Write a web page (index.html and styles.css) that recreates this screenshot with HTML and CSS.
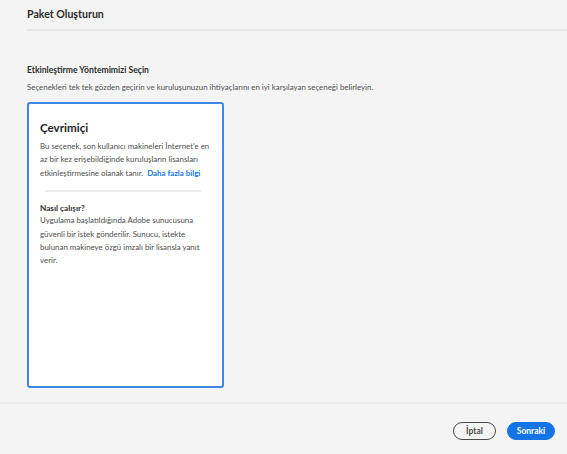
FILE: index.html
```html
<!DOCTYPE html>
<html lang="tr">
<head>
<meta charset="utf-8">
<title>Paket Oluşturun</title>
<link rel="stylesheet" href="styles.css">
</head>
<body>
<div class="page">
  <header class="header">
    <h1 class="header-title">Paket Oluşturun</h1>
  </header>
  <main class="content">
    <h2 class="section-title">Etkinleştirme Yöntemimizi Seçin</h2>
    <p class="section-desc">Seçenekleri tek tek gözden geçirin ve kuruluşunuzun ihtiyaçlarını en iyi karşılayan seçeneği belirleyin.</p>
    <div class="card">
      <h3 class="card-title">Çevrimiçi</h3>
      <p class="card-text">Bu seçenek, son kullanıcı makineleri İnternet'e en az bir kez erişebildiğinde kuruluşların lisansları etkinleştirmesine olanak tanır.&nbsp; <a class="link" href="#">Daha fazla bilgi</a></p>
      <hr class="card-divider">
      <h4 class="card-subtitle">Nasıl çalışır?</h4>
      <p class="card-text">Uygulama başlatıldığında Adobe sunucusuna güvenli bir istek gönderilir. Sunucu, istekte bulunan makineye özgü imzalı bir lisansla yanıt verir.</p>
    </div>
  </main>
  <footer class="footer">
    <button class="btn btn-secondary">İptal</button>
    <button class="btn btn-primary">Sonraki</button>
  </footer>
</div>
</body>
</html>
```
FILE: styles.css
```css
* { box-sizing: border-box; }
html, body { margin: 0; padding: 0; }
body {
  background: #f4f4f4;
  font-family: "Lato", "Open Sans", sans-serif;
  color: #2c2c2c;
  width: 567px;
  height: 454px;
  overflow: hidden;
}
.page {
  display: flex;
  flex-direction: column;
  height: 454px;
}
.header {
  margin-left: 27px;
  height: 31px;
  border-bottom: 2px solid #e8e8e8;
  display: flex;
  align-items: center;
}
.header-title {
  margin: 0;
  font-size: 10.6px;
  font-weight: 700;
  color: #2c2c2c;
  padding-bottom: 1px;
}
.content {
  flex: 1;
  padding: 33px 0 0 27px;
  border-bottom: 2px solid #ebebeb;
}
.section-title {
  margin: 0;
  font-size: 8.6px;
  font-weight: 700;
  color: #2c2c2c;
  line-height: 12px;
}
.section-desc {
  margin: 5px 0 0;
  font-size: 7.9px;
  color: #505050;
  line-height: 12px;
}
.card {
  margin-top: 9px;
  width: 197px;
  height: 286px;
  background: #fff;
  border: 2px solid #3f86e6;
  border-radius: 3px;
  padding: 16px 10px 0 11px;
}
.card-title {
  margin: 0;
  font-size: 11.6px;
  font-weight: 700;
  color: #1e1e1e;
  line-height: 16px;
}
.card-text {
  margin: 4px 0 0;
  font-size: 7.9px;
  line-height: 13.4px;
  color: #4e4e4e;
}
.link {
  color: #1473e6;
  font-weight: 700;
  text-decoration: none;
}
.card-divider {
  margin: 10px 11px 0 5px;
  border: 0;
  height: 2px;
  background: #ececec;
}
.card-subtitle {
  margin: 10px 0 0;
  font-size: 8.2px;
  font-weight: 700;
  color: #2c2c2c;
  line-height: 12px;
}
.card-subtitle + .card-text { margin-top: 0; }
.footer {
  height: 50px;
  display: flex;
  justify-content: flex-end;
  align-items: center;
  gap: 11px;
  padding: 4px 12px 0 0;
}
.btn {
  height: 18px;
  border-radius: 9px;
  font-family: inherit;
  font-size: 8.5px;
  font-weight: 700;
  padding: 0;
  cursor: pointer;
}
.btn-secondary {
  width: 43px;
  background: transparent;
  border: 1.5px solid #4b4b4b;
  color: #4b4b4b;
}
.btn-primary {
  width: 48px;
  background: #1473e6;
  border: 1.5px solid #1473e6;
  color: #fff;
}
```
